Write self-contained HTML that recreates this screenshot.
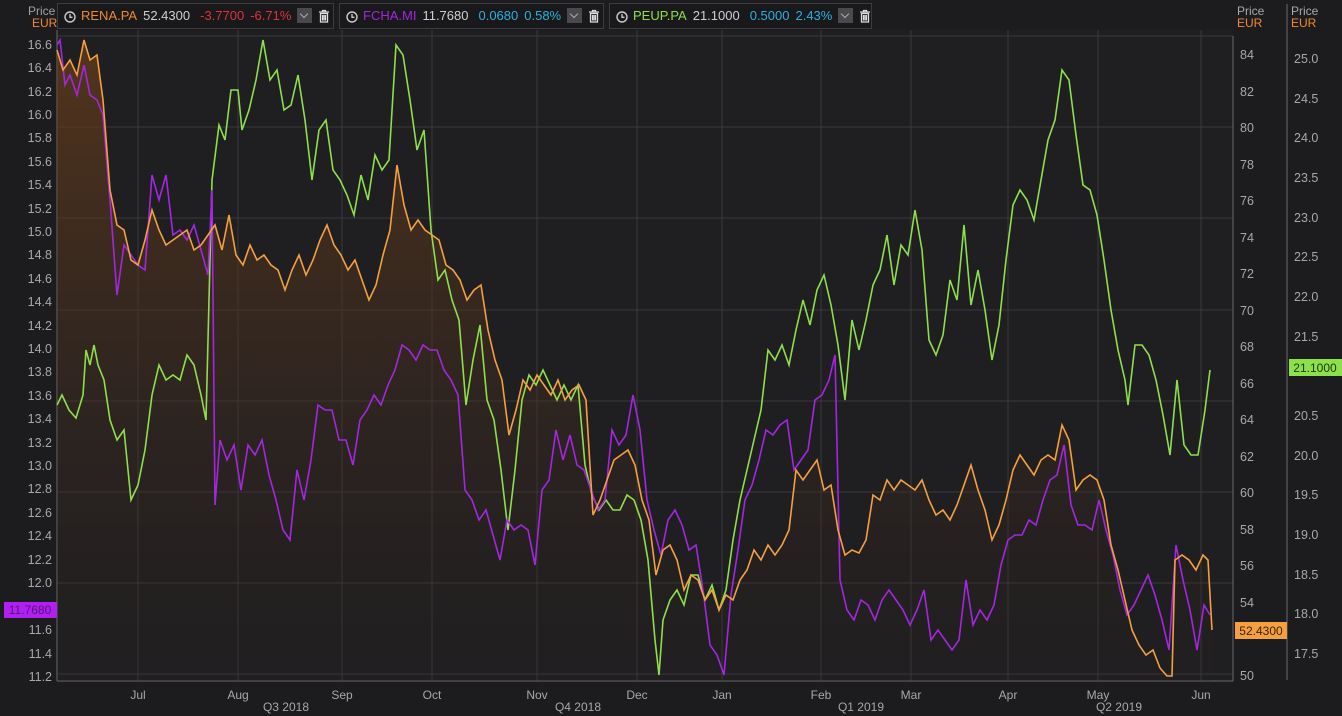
<!DOCTYPE html>
<html><head><meta charset="utf-8"><style>
html,body{margin:0;padding:0;background:#1c1b1e;width:1342px;height:716px;overflow:hidden;font-family:"Liberation Sans",sans-serif}
svg{position:absolute;left:0;top:0}
.leg{position:absolute;top:3px;height:24px;background:#19191b;border:1px solid #3c3c3e;font-size:13px;line-height:24px;color:#d0d0d0;white-space:nowrap}
.leg span{margin-left:6px}
.leg svg.i{position:static;vertical-align:-3px;margin-left:6px}
.dd{display:inline-block;width:15px;height:15px;background:#4a4a4e;vertical-align:-3px;margin-left:6px;position:relative}
.dd:after{content:"";position:absolute;left:4px;top:3px;width:5px;height:5px;border-right:1px solid #aaa;border-bottom:1px solid #aaa;transform:rotate(45deg)}
</style></head><body>
<svg width="1342" height="716" viewBox="0 0 1342 716">
<defs><linearGradient id="g" x1="0" y1="0" x2="0" y2="1"><stop offset="0" stop-color="#6b3f1a" stop-opacity="0.7"/><stop offset="1" stop-color="#2a2220" stop-opacity="0.15"/></linearGradient></defs>
<rect x="57" y="30" width="1176" height="651" fill="#1f1e21"/>
<g stroke="#3a393c" stroke-width="1">
<line x1="57" y1="36" x2="1233" y2="36"/><line x1="57" y1="127" x2="1233" y2="127"/><line x1="57" y1="218" x2="1233" y2="218"/><line x1="57" y1="310" x2="1233" y2="310"/><line x1="57" y1="401" x2="1233" y2="401"/><line x1="57" y1="492" x2="1233" y2="492"/><line x1="57" y1="583" x2="1233" y2="583"/><line x1="57" y1="674" x2="1233" y2="674"/>
<line x1="138" y1="30" x2="138" y2="681"/><line x1="238" y1="30" x2="238" y2="681"/><line x1="342" y1="30" x2="342" y2="681"/><line x1="432" y1="30" x2="432" y2="681"/><line x1="537" y1="30" x2="537" y2="681"/><line x1="637" y1="30" x2="637" y2="681"/><line x1="722" y1="30" x2="722" y2="681"/><line x1="821" y1="30" x2="821" y2="681"/><line x1="911" y1="30" x2="911" y2="681"/><line x1="1008" y1="30" x2="1008" y2="681"/><line x1="1098" y1="30" x2="1098" y2="681"/><line x1="1201" y1="30" x2="1201" y2="681"/>
</g>
<g stroke="#6a6a6c" stroke-width="1"><line x1="57" y1="30" x2="57" y2="681"/><line x1="57" y1="681" x2="1233" y2="681"/><line x1="1233" y1="36" x2="1233" y2="681"/><line x1="1287" y1="4" x2="1287" y2="680"/></g>
<polygon fill="url(#g)" points="57,50 63,70 70,60 77,75 84,40 90,60 97,55 103,100 110,190 117,225 124,230 131,260 138,265 145,240 152,210 159,230 166,245 173,240 180,235 187,230 194,250 201,245 208,235 215,225 222,250 229,215 236,255 243,265 250,245 257,260 264,255 271,265 278,270 285,290 292,270 299,255 306,275 313,260 320,240 327,225 334,245 341,255 348,270 355,260 362,280 369,300 376,285 383,255 390,230 397,165 404,205 411,230 418,220 425,230 432,235 439,240 446,265 453,270 460,280 467,300 474,290 481,285 488,330 495,360 502,380 509,435 516,410 523,380 530,390 537,375 544,385 551,395 558,380 565,400 572,390 579,385 586,400 593,515 600,500 607,480 614,460 621,455 628,450 635,465 642,500 649,520 656,575 663,550 670,545 677,560 684,590 691,575 698,580 705,600 712,590 719,610 726,595 733,600 740,580 747,570 754,550 761,560 768,545 775,555 782,545 789,530 796,470 803,480 810,470 817,460 824,490 831,485 838,530 845,555 852,550 859,553 866,540 873,495 880,500 887,480 894,490 901,480 908,485 915,490 922,480 929,500 936,515 943,510 950,520 957,505 964,485 971,465 978,490 985,510 992,540 999,525 1006,500 1013,470 1020,455 1027,465 1034,475 1041,460 1048,455 1055,460 1062,425 1069,440 1076,490 1083,480 1090,475 1097,480 1104,500 1111,545 1118,570 1125,600 1132,630 1139,645 1146,655 1153,650 1160,668 1167,676 1172,676 1175,560 1182,555 1189,560 1196,570 1203,555 1208,560 1212,630 1212,681 57,681"/>
<polyline fill="none" stroke="#8ee04a" stroke-width="1.6" points="57,405 62,395 69,410 76,418 83,395 86,350 90,365 94,345 98,365 104,380 110,420 117,440 124,430 131,500 138,485 145,450 152,395 159,365 166,380 173,375 180,380 187,355 194,365 201,395 206,420 212,180 219,125 225,140 231,90 238,90 242,130 249,110 256,80 263,40 270,80 277,70 284,110 291,105 298,75 305,120 312,180 319,130 326,120 333,170 340,180 347,195 354,215 361,175 368,200 375,155 382,170 389,160 396,45 403,55 410,100 417,150 424,130 431,230 438,280 445,270 452,300 459,320 466,405 473,360 480,325 487,400 494,420 501,470 508,530 515,470 522,400 529,375 536,385 543,370 550,385 557,400 564,385 571,400 578,385 585,465 592,495 599,510 606,500 613,510 620,510 627,495 634,500 641,520 648,560 655,640 659,675 663,620 670,600 677,590 684,605 691,575 698,575 705,600 712,585 719,610 726,590 733,540 740,500 747,470 754,440 761,410 768,350 775,360 782,345 789,365 796,330 803,300 810,325 817,290 824,275 831,305 838,345 845,400 852,320 859,350 866,320 873,285 880,270 887,235 894,285 901,245 908,255 915,210 922,250 929,340 936,355 943,335 950,280 957,300 964,225 971,305 978,270 985,310 992,360 999,325 1006,260 1013,205 1020,190 1027,200 1034,220 1041,180 1048,140 1055,120 1062,70 1069,80 1076,135 1083,185 1090,190 1097,215 1104,260 1111,310 1118,350 1125,380 1128,405 1135,345 1142,345 1149,355 1156,380 1163,415 1170,455 1177,380 1184,445 1191,455 1198,455 1205,410 1210,370"/>
<polyline fill="none" stroke="#a426e0" stroke-width="1.6" points="57,45 60,40 65,85 70,75 77,95 84,65 90,95 97,100 103,115 110,200 117,295 124,245 131,255 138,265 145,270 152,175 159,200 166,175 173,235 180,230 187,240 194,225 201,250 208,275 212,190 215,505 220,440 227,460 234,445 241,490 248,445 255,455 262,440 269,475 276,500 283,530 290,540 297,470 304,500 311,460 318,405 325,410 332,410 339,440 346,440 353,465 360,420 367,410 374,395 381,405 388,385 395,370 402,345 409,350 416,360 423,345 430,350 437,350 444,370 451,380 458,395 465,490 472,500 479,520 486,510 493,535 500,560 507,520 514,530 521,525 528,530 535,565 542,490 549,480 556,430 563,460 570,435 577,465 584,470 591,490 598,510 605,500 612,430 619,445 626,435 633,395 640,430 647,500 654,530 661,555 668,520 675,510 682,525 689,550 696,545 703,590 710,645 717,655 724,675 731,595 738,550 745,500 752,485 759,460 766,430 773,435 780,425 787,420 794,470 801,460 808,450 815,400 822,395 829,380 835,355 840,580 847,610 854,620 861,600 868,605 875,620 882,600 889,590 896,600 903,610 910,625 917,610 924,590 931,640 938,630 945,640 952,650 959,640 966,580 973,625 980,610 987,620 994,605 1001,565 1008,540 1015,535 1022,535 1029,520 1036,525 1043,500 1050,480 1057,475 1064,445 1071,505 1078,525 1085,525 1092,530 1099,500 1106,530 1113,555 1120,590 1127,615 1134,605 1141,590 1148,575 1155,595 1162,620 1169,650 1176,545 1183,580 1190,610 1197,650 1204,605 1210,615"/>
<polyline fill="none" stroke="#f5a040" stroke-width="1.6" points="57,50 63,70 70,60 77,75 84,40 90,60 97,55 103,100 110,190 117,225 124,230 131,260 138,265 145,240 152,210 159,230 166,245 173,240 180,235 187,230 194,250 201,245 208,235 215,225 222,250 229,215 236,255 243,265 250,245 257,260 264,255 271,265 278,270 285,290 292,270 299,255 306,275 313,260 320,240 327,225 334,245 341,255 348,270 355,260 362,280 369,300 376,285 383,255 390,230 397,165 404,205 411,230 418,220 425,230 432,235 439,240 446,265 453,270 460,280 467,300 474,290 481,285 488,330 495,360 502,380 509,435 516,410 523,380 530,390 537,375 544,385 551,395 558,380 565,400 572,390 579,385 586,400 593,515 600,500 607,480 614,460 621,455 628,450 635,465 642,500 649,520 656,575 663,550 670,545 677,560 684,590 691,575 698,580 705,600 712,590 719,610 726,595 733,600 740,580 747,570 754,550 761,560 768,545 775,555 782,545 789,530 796,470 803,480 810,470 817,460 824,490 831,485 838,530 845,555 852,550 859,553 866,540 873,495 880,500 887,480 894,490 901,480 908,485 915,490 922,480 929,500 936,515 943,510 950,520 957,505 964,485 971,465 978,490 985,510 992,540 999,525 1006,500 1013,470 1020,455 1027,465 1034,475 1041,460 1048,455 1055,460 1062,425 1069,440 1076,490 1083,480 1090,475 1097,480 1104,500 1111,545 1118,570 1125,600 1132,630 1139,645 1146,655 1153,650 1160,668 1167,676 1172,676 1175,560 1182,555 1189,560 1196,570 1203,555 1208,560 1212,630"/>
<g font-size="12" fill="#a8a8aa" font-family="Liberation Sans,sans-serif">
<text x="28" y="15" fill="#a0a0a2">Price</text><text x="32" y="27" fill="#f08a2c">EUR</text>
<text x="1237" y="15">Price</text><text x="1237" y="27" fill="#f08a2c">EUR</text>
<text x="1291" y="15">Price</text><text x="1291" y="27" fill="#f08a2c">EUR</text>
<g text-anchor="end" font-size="12.5">
<text x="52" y="49">16.6</text><text x="52" y="72">16.4</text><text x="52" y="96">16.2</text><text x="52" y="119">16.0</text><text x="52" y="142">15.8</text><text x="52" y="166">15.6</text><text x="52" y="189">15.4</text><text x="52" y="213">15.2</text><text x="52" y="236">15.0</text><text x="52" y="259">14.8</text><text x="52" y="283">14.6</text><text x="52" y="306">14.4</text><text x="52" y="330">14.2</text><text x="52" y="353">14.0</text><text x="52" y="376">13.8</text><text x="52" y="400">13.6</text><text x="52" y="423">13.4</text><text x="52" y="447">13.2</text><text x="52" y="470">13.0</text><text x="52" y="493">12.8</text><text x="52" y="517">12.6</text><text x="52" y="540">12.4</text><text x="52" y="564">12.2</text><text x="52" y="587">12.0</text><text x="52" y="634">11.6</text><text x="52" y="658">11.4</text><text x="52" y="681">11.2</text>
</g>
<g font-size="12.5">
<text x="1240" y="59">84</text><text x="1240" y="96">82</text><text x="1240" y="132">80</text><text x="1240" y="169">78</text><text x="1240" y="205">76</text><text x="1240" y="242">74</text><text x="1240" y="278">72</text><text x="1240" y="315">70</text><text x="1240" y="351">68</text><text x="1240" y="388">66</text><text x="1240" y="424">64</text><text x="1240" y="461">62</text><text x="1240" y="497">60</text><text x="1240" y="534">58</text><text x="1240" y="570">56</text><text x="1240" y="607">54</text><text x="1240" y="680">50</text>
<text x="1294" y="63">25.0</text><text x="1294" y="103">24.5</text><text x="1294" y="142">24.0</text><text x="1294" y="182">23.5</text><text x="1294" y="222">23.0</text><text x="1294" y="261">22.5</text><text x="1294" y="301">22.0</text><text x="1294" y="341">21.5</text><text x="1294" y="420">20.5</text><text x="1294" y="460">20.0</text><text x="1294" y="499">19.5</text><text x="1294" y="539">19.0</text><text x="1294" y="579">18.5</text><text x="1294" y="618">18.0</text><text x="1294" y="658">17.5</text>
</g>
<g text-anchor="middle"><text x="138" y="699">Jul</text><text x="238" y="699">Aug</text><text x="342" y="699">Sep</text><text x="432" y="699">Oct</text><text x="537" y="699">Nov</text><text x="637" y="699">Dec</text><text x="722" y="699">Jan</text><text x="821" y="699">Feb</text><text x="911" y="699">Mar</text><text x="1008" y="699">Apr</text><text x="1098" y="699">May</text><text x="1201" y="699">Jun</text>
<text x="286" y="711">Q3 2018</text><text x="578" y="711">Q4 2018</text><text x="861" y="711">Q1 2019</text><text x="1119" y="711">Q2 2019</text></g>
</g>
<rect x="4" y="602" width="53" height="16" fill="#b020f0"/><text x="30" y="614" font-size="12" fill="#5a1080" text-anchor="middle" font-family="Liberation Sans,sans-serif">11.7680</text>
<rect x="1235" y="622" width="52" height="17" fill="#f5a040"/><text x="1261" y="635" font-size="12" fill="#402000" text-anchor="middle" font-family="Liberation Sans,sans-serif">52.4300</text>
<rect x="1289" y="359" width="53" height="17" fill="#8ee04a"/><text x="1315" y="372" font-size="12" fill="#1a3a08" text-anchor="middle" font-family="Liberation Sans,sans-serif">21.1000</text>
</svg>
<div class="leg" style="left:57px;width:275px"><svg class="i" width="12" height="12" viewBox="0 0 12 12"><circle cx="6" cy="6" r="5" fill="none" stroke="#ccc" stroke-width="1.4"/><path d="M6 3V6.3H8.5" fill="none" stroke="#ccc" stroke-width="1.3"/></svg><span style="color:#f08a2c;margin-left:5px">RENA.PA</span><span>52.4300</span><span style="color:#e0303c;margin-left:10px">-3.7700</span><span style="color:#e0303c">-6.71%</span><span class="dd"></span><svg class="i" width="12" height="14" viewBox="0 0 12 14"><path d="M1 3H11M4.5 3V1.5H7.5V3M2.5 4.5H9.5V13H2.5Z M4.5 6V11.5M6 6V11.5M7.5 6V11.5" fill="none" stroke="#ddd" stroke-width="1.3"/></svg></div>
<div class="leg" style="left:339px;width:263px"><svg class="i" width="12" height="12" viewBox="0 0 12 12"><circle cx="6" cy="6" r="5" fill="none" stroke="#ccc" stroke-width="1.4"/><path d="M6 3V6.3H8.5" fill="none" stroke="#ccc" stroke-width="1.3"/></svg><span style="color:#a426e0;margin-left:5px">FCHA.MI</span><span>11.7680</span><span style="color:#2ab0e0;margin-left:10px">0.0680</span><span style="color:#2ab0e0">0.58%</span><span class="dd"></span><svg class="i" width="12" height="14" viewBox="0 0 12 14"><path d="M1 3H11M4.5 3V1.5H7.5V3M2.5 4.5H9.5V13H2.5Z M4.5 6V11.5M6 6V11.5M7.5 6V11.5" fill="none" stroke="#ddd" stroke-width="1.3"/></svg></div>
<div class="leg" style="left:609px;width:261px"><svg class="i" width="12" height="12" viewBox="0 0 12 12"><circle cx="6" cy="6" r="5" fill="none" stroke="#ccc" stroke-width="1.4"/><path d="M6 3V6.3H8.5" fill="none" stroke="#ccc" stroke-width="1.3"/></svg><span style="color:#8ee04a;margin-left:5px">PEUP.PA</span><span>21.1000</span><span style="color:#2ab0e0;margin-left:10px">0.5000</span><span style="color:#2ab0e0">2.43%</span><span class="dd"></span><svg class="i" width="12" height="14" viewBox="0 0 12 14"><path d="M1 3H11M4.5 3V1.5H7.5V3M2.5 4.5H9.5V13H2.5Z M4.5 6V11.5M6 6V11.5M7.5 6V11.5" fill="none" stroke="#ddd" stroke-width="1.3"/></svg></div>
</body></html>
